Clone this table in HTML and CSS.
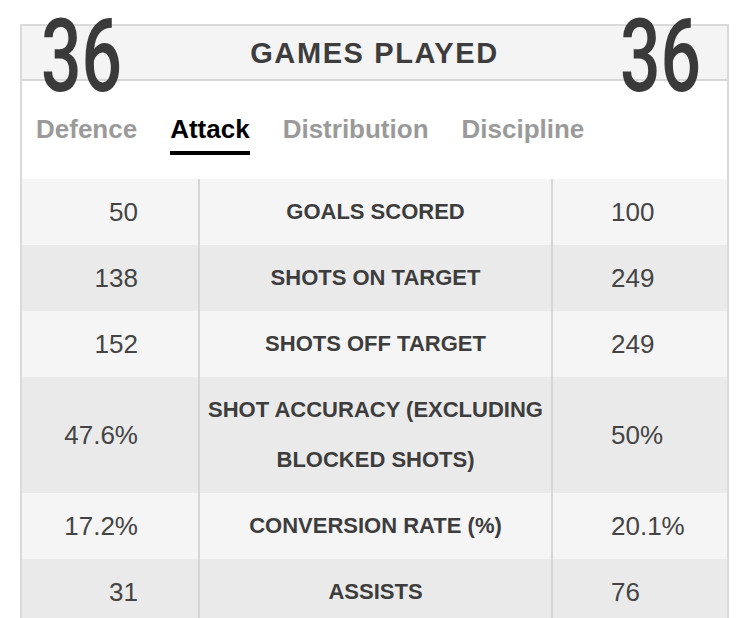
FILE: index.html
```html
<!DOCTYPE html>
<html>
<head>
<meta charset="utf-8">
<link rel="stylesheet" href="styles.css">
</head>
<body>
<div class="card">
  <div class="head">
    <span class="big big-left">36</span>
    <h1 class="title">GAMES PLAYED</h1>
    <span class="big big-right">36</span>
  </div>
  <div class="tabs">
    <span class="tab">Defence</span>
    <span class="tab active">Attack</span>
    <span class="tab">Distribution</span>
    <span class="tab">Discipline</span>
  </div>
  <div class="table">
    <div class="row odd"><div class="cell left">50</div><div class="cell mid">GOALS SCORED</div><div class="cell right">100</div></div>
    <div class="row even"><div class="cell left">138</div><div class="cell mid">SHOTS ON TARGET</div><div class="cell right">249</div></div>
    <div class="row odd"><div class="cell left">152</div><div class="cell mid">SHOTS OFF TARGET</div><div class="cell right">249</div></div>
    <div class="row even"><div class="cell left">47.6%</div><div class="cell mid">SHOT ACCURACY (EXCLUDING BLOCKED SHOTS)</div><div class="cell right">50%</div></div>
    <div class="row odd"><div class="cell left">17.2%</div><div class="cell mid">CONVERSION RATE (%)</div><div class="cell right">20.1%</div></div>
    <div class="row even"><div class="cell left">31</div><div class="cell mid">ASSISTS</div><div class="cell right">76</div></div>
  </div>
</div>
</body>
</html>
```
FILE: styles.css
```css
html, body {
  margin: 0;
  padding: 0;
  background: #ffffff;
}
body {
  font-family: "Liberation Sans", Arial, sans-serif;
  overflow: hidden;
}
.card {
  margin: 24px 0 0 20px;
  width: 709px;
  box-sizing: border-box;
  border: 2px solid #dadada;
  border-bottom: none;
}
.head {
  position: relative;
  height: 53px;
  background: #f4f4f4;
  border-bottom: 2px solid #d6d6d6;
  display: flex;
  align-items: center;
  justify-content: center;
}
.title {
  margin: 0;
  font-size: 29px;
  font-weight: 700;
  letter-spacing: 1.6px;
  color: #3d3d3d;
  line-height: 30px;
}
.big {
  position: absolute;
  top: -30px;
  font-family: Roboto, "Liberation Sans", sans-serif;
  font-weight: 500;
  font-size: 102px;
  line-height: normal;
  color: #3a3a3a;
  transform: scaleX(0.7);
  transform-origin: left top;
}
.big-left {
  left: 19px;
}
.big-right {
  left: 598px;
}
.tabs {
  display: flex;
  gap: 33px;
  padding: 33px 0 0 14px;
  margin-bottom: 24px;
}
.tab {
  font-size: 26px;
  font-weight: 700;
  line-height: 30px;
  color: #9a9a9a;
  padding-bottom: 7px;
  border-bottom: 4px solid transparent;
}
.tab.active {
  color: #000000;
  border-bottom-color: #000000;
}
.row {
  display: grid;
  grid-template-columns: 178px 351px 1fr;
}
.row.odd {
  background: #f5f5f5;
}
.row.even {
  background: #eaeaea;
}
.cell {
  padding: 8px;
  line-height: 50px;
  display: flex;
  align-items: center;
}
.left {
  border-right: 2px solid #d6d6d6;
  justify-content: flex-end;
  padding-right: 60px;
  font-size: 26px;
  color: #444444;
}
.mid {
  justify-content: center;
  text-align: center;
  font-size: 22px;
  font-weight: 700;
  color: #3d3d3d;
}
.right {
  border-left: 2px solid #d6d6d6;
  padding-left: 58px;
  font-size: 26px;
  color: #444444;
}
```
